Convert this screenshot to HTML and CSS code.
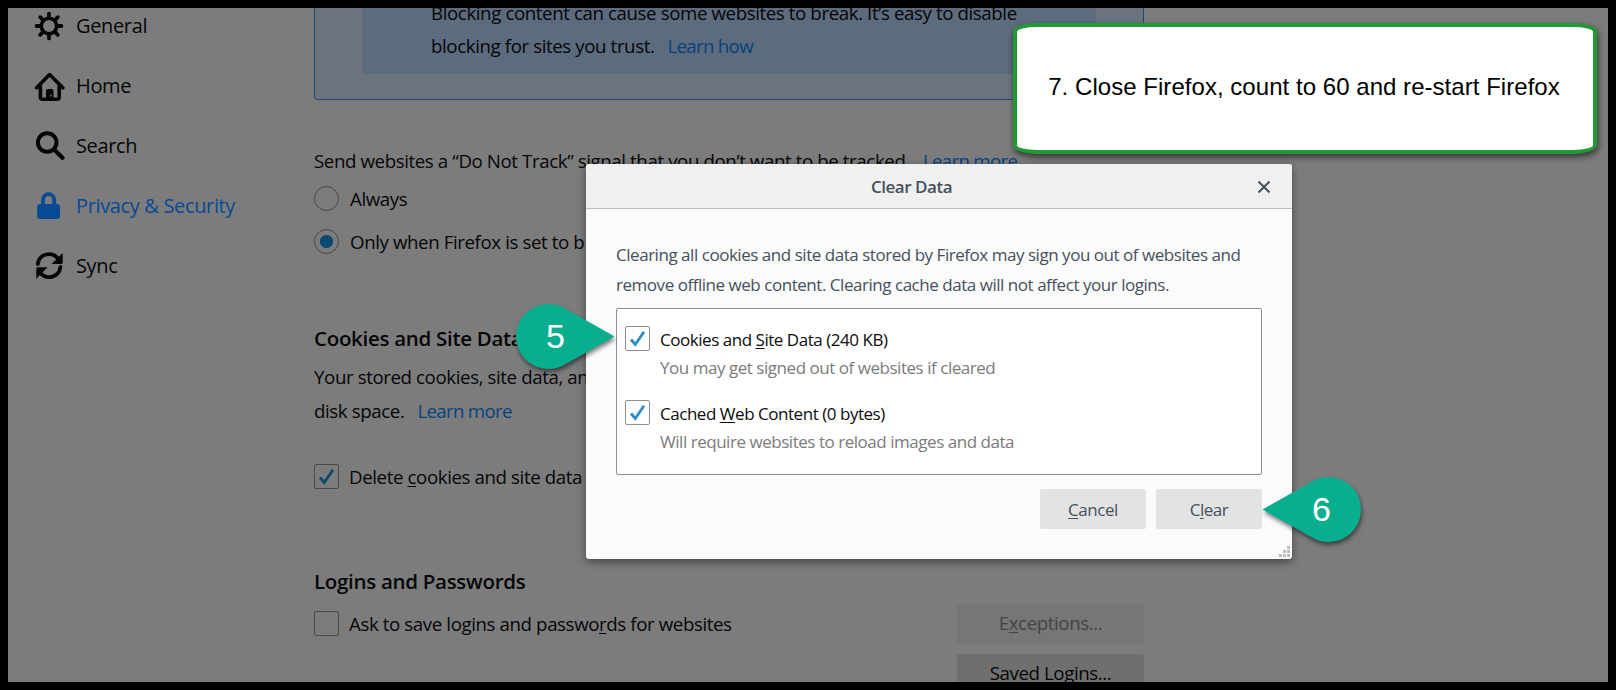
FILE: index.html
```html
<!DOCTYPE html>
<html lang="en">
<head>
<meta charset="utf-8">
<title>Clear Data</title>
<link rel="stylesheet" href="styles.css">
</head>
<body>
<div class="frame">
  <div class="page">
    <nav class="sidebar">
      <div class="nav-item">
        <svg class="icon" viewBox="0 0 32 32"><circle cx="16" cy="16" r="7.7" fill="none" stroke="currentColor" stroke-width="3.6"/><path d="M16 3.6V7M16 25v3.4M3.6 16H7M25 16h3.4M7.2 7.2l2.6 2.6M22.2 22.2l2.6 2.6M24.8 7.2l-2.6 2.6M9.8 22.2l-2.6 2.6" stroke="currentColor" stroke-width="3.8" stroke-linecap="round"/></svg>
        <span>General</span>
      </div>
      <div class="nav-item">
        <svg class="icon" viewBox="0 0 32 32"><path d="M3.6 17.8 16.6 4.6 29.8 17.8M7.4 16v11.3a2 2 0 0 0 2 2h14.8a2 2 0 0 0 2-2V16" fill="none" stroke="currentColor" stroke-width="3.6" stroke-linecap="round" stroke-linejoin="round"/><path d="M13 30V21a2 2 0 0 1 2-2h3.500a2 2 0 0 1 2 2v9zM17.300 24.600v2h1.200v-2z" fill="currentColor" fill-rule="evenodd"/></svg>
        <span>Home</span>
      </div>
      <div class="nav-item">
        <svg class="icon" viewBox="0 0 32 32"><circle cx="14.200" cy="12.500" r="9.300" fill="none" stroke="currentColor" stroke-width="4"/><path d="M21 19.500 29.500 27.800" stroke="currentColor" stroke-width="4.200" stroke-linecap="round"/></svg>
        <span>Search</span>
      </div>
      <div class="nav-item selected">
        <svg class="icon" viewBox="0 0 32 32"><path d="M10 15V9.800a5.600 5.600 0 0 1 11.200 0V15" fill="none" stroke="currentColor" stroke-width="3.800"/><rect x="4.200" y="14" width="22.800" height="15" rx="3" fill="currentColor"/></svg>
        <span>Privacy &amp; Security</span>
      </div>
      <div class="nav-item">
        <svg class="icon" viewBox="0 0 32 32"><path d="M4.800 14A11.300 11.300 0 0 1 25 8.600M27.400 17A11.300 11.300 0 0 1 7.500 23" fill="none" stroke="currentColor" stroke-width="3.800" stroke-linecap="round"/><path d="M29.700 3v9.500a1.500 1.500 0 0 1-1.500 1.500H18.500zM3.300 28.800v-10a1.500 1.500 0 0 1 1.500-1.500h9.700z" fill="currentColor"/></svg>
        <span>Sync</span>
      </div>
    </nav>
    <main class="content">
      <section class="tracking">
        <div class="warning">
          <div>Blocking content can cause some websites to break. It’s easy to disable</div>
          <div>blocking for sites you trust.<a class="link">Learn how</a></div>
        </div>
      </section>
      <p class="dnt">Send websites a “Do Not Track” signal that you don’t want to be tracked.<a class="link">Learn more</a></p>
      <div class="choice first"><span class="radio"></span><span>Always</span></div>
      <div class="choice second"><span class="radio on"></span><span>Only when Firefox is set to b</span></div>

      <h2 class="cookies-title">Cookies and Site Data</h2>
      <p class="stored">Your stored cookies, site data, an<br>disk space.<a class="link">Learn more</a></p>
      <div class="choice delete">
        <span class="check"><svg viewBox="0 0 25 25"><path d="M6 13.500 10.300 18.500 19 5.800"/></svg></span>
        <span>Delete <u>c</u>ookies and site data</span>
      </div>

      <h2 class="logins-title">Logins and Passwords</h2>
      <div class="logins">
        <div class="choice ask"><span class="check"></span><span>Ask to save logins and passwo<u>r</u>ds for websites</span></div>
        <div class="side-buttons">
          <div class="side-button disabled">E<u>x</u>ceptions...</div>
          <div class="side-button">Saved Logins...</div>
        </div>
      </div>
    </main>
  </div>

  <div class="dialog">
    <header class="dialog-head">
      <span class="dialog-title">Clear Data</span>
      <svg class="close" viewBox="0 0 14 14"><path d="M1.500 1.500 12.500 12.500M12.500 1.500 1.500 12.500"/></svg>
    </header>
    <div class="dialog-body">
      <p class="dialog-text">Clearing all cookies and site data stored by Firefox may sign you out of websites and<br>remove offline web content. Clearing cache data will not affect your logins.</p>
      <div class="options">
        <div class="option">
          <span class="check"><svg viewBox="0 0 25 25"><path d="M6 13.500 10.300 18.500 19 5.800"/></svg></span>
          <div><div class="option-name">Cookies and <u>S</u>ite Data (240 KB)</div><div class="option-note">You may get signed out of websites if cleared</div></div>
        </div>
        <div class="option">
          <span class="check"><svg viewBox="0 0 25 25"><path d="M6 13.500 10.300 18.500 19 5.800"/></svg></span>
          <div><div class="option-name">Cached <u>W</u>eb Content (0 bytes)</div><div class="option-note">Will require websites to reload images and data</div></div>
        </div>
      </div>
      <div class="actions">
        <div class="button"><u>C</u>ancel</div>
        <div class="button">C<u>l</u>ear</div>
      </div>
    </div>
    <svg class="grip" viewBox="0 0 11 11"><path d="M8 0h3v3H8zM4 4h3v3H4zM8 4h3v3H8zM0 8h3v3H0zM4 8h3v3H4zM8 8h3v3H8z"/></svg>
  </div>

  <div class="callout">7. Close Firefox, count to 60 and re-start Firefox</div>

  <div class="pin pin-five">
    <svg viewBox="0 0 99 65"><path d="M98.500 32.500 48.500 4.200A32.500 32.500 0 1 0 48.500 60.800Z"/></svg>
    <span>5</span>
  </div>
  <div class="pin pin-six">
    <svg viewBox="0 0 99 65"><path d="M.5 32.500 50.500 4.200A32.500 32.500 0 1 1 50.500 60.800Z"/></svg>
    <span>6</span>
  </div>
</div>
</body>
</html>
```
FILE: styles.css
```css
* { box-sizing: border-box; }
body, p, h2 { margin: 0; }
body {
  background: #000;
  font-family: "Open Sans", "Noto Sans", sans-serif;
  font-size: 18.700px;
  letter-spacing: -.4px;
  color: #060607;
  white-space: nowrap;
}
u { text-decoration-thickness: 1px; text-underline-offset: 2px; text-decoration-skip-ink: none; }
.frame {
  position: relative;
  width: 1616px;
  height: 690px;
  border: 8px solid #000;
  background: #7c7c7d;
  overflow: hidden;
}
.page { display: flex; height: 674px; overflow: hidden; }
.sidebar { width: 306px; flex: none; padding: 0 0 0 25px; margin-top: -12px; }
.nav-item { display: flex; align-items: center; gap: 11px; height: 60px; font-size: 20px; letter-spacing: -.35px; }
.nav-item span { padding-bottom: 2px; }
.nav-item.selected { color: #054a93; }
.icon { width: 32px; height: 32px; }
.link { color: #07437f; margin-left: 13px; letter-spacing: -.7px; }

.content { width: 830px; flex: none; }
.tracking {
  margin-top: -12px;
  padding: 0 47px 25px;
  border: 1px solid #1b4c80;
  border-top: 0;
  border-radius: 0 0 4px 4px;
  background: #6b747d;
}
.warning { padding: 0 70px 12px 69px; background: #5c6b7d; border-radius: 0 0 3px 3px; line-height: 33px; }
.dnt { margin-top: 44px; line-height: 33px; }
.choice { display: flex; gap: 11px; height: 25px; line-height: 25px; }
.choice.first { margin-top: 9px; }
.choice.second { margin-top: 18px; }
.radio { width: 25px; height: 25px; border: 1px solid #4a4a4b; border-radius: 50%; }
.radio.on { background: radial-gradient(circle, #0b4a73 6.200px, transparent 7px); }
.check { width: 25px; height: 25px; flex: none; border: 1px solid #4a4a4b; border-radius: 2px; }
.check svg { display: block; width: 25px; height: 25px; margin: -1px; fill: none; stroke: #0e4a70; stroke-width: 2.800; }
h2 { font-size: 20.500px; line-height: 27px; font-weight: 600; letter-spacing: -.3px; }
.cookies-title { margin-top: 71px; }
.stored { margin-top: 8px; line-height: 34px; }
.choice.delete { margin-top: 36px; gap: 10px; }
.logins-title { margin-top: 79px; }
.logins { display: flex; justify-content: space-between; align-items: flex-start; }
.choice.ask { margin-top: 16px; gap: 10px; }
.side-buttons { display: flex; flex-direction: column; gap: 10px; padding-top: 9px; }
.side-button { width: 187px; height: 40px; line-height: 38px; text-align: center; border-radius: 2px; background: #6f6f70; }
.side-button.disabled { background: #767677; color: #444445; }

.dialog {
  position: absolute;
  left: 578px;
  top: 156px;
  width: 706px;
  height: 395px;
  border-radius: 3px;
  background: #fbfbfb;
  box-shadow: 0 3px 8px rgba(0, 0, 0, .45);
  color: #45505c;
  font-size: 17px;
  letter-spacing: -.465px;
}
.dialog-head {
  display: flex;
  align-items: center;
  justify-content: center;
  position: relative;
  height: 45px;
  padding-right: 55px;
  border-bottom: 1px solid #bebebe;
  border-radius: 3px 3px 0 0;
  background: #f0f0f0;
  font-weight: 600;
}
.close { position: absolute; right: 21px; top: 16px; width: 14px; height: 14px; stroke: #45505c; stroke-width: 2; }
.dialog-body { padding: 31px 30px 0; }
.dialog-text { line-height: 30px; }
.options { height: 167px; margin-top: 8px; padding: 17px 8px; border: 1px solid #8e8e8e; border-radius: 2px; background: #fff; }
.option { display: flex; gap: 10px; height: 74px; }
.option .check { border-color: #8e8e93; }
.option .check svg { stroke: #2a8ccb; }
.option-name { line-height: 28px; color: #0c0c0d; }
.option-note { line-height: 28px; color: #7b7b7c; }
.actions { display: flex; justify-content: flex-end; gap: 10px; margin-top: 14px; }
.button { width: 106px; height: 40px; line-height: 41px; text-align: center; border-radius: 2px; background: #e3e3e3; }
.grip { position: absolute; right: 2px; bottom: 2px; width: 11px; height: 11px; fill: #bdbdbd; }

.callout {
  position: absolute;
  left: 1005px;
  top: 15px;
  width: 584px;
  height: 131px;
  padding-right: 2px;
  border: 4px solid #229a33;
  border-radius: 24px / 9px;
  background: #fff;
  box-shadow: 1px 3px 6px rgba(0, 0, 0, .6);
  color: #000;
  font: 24px/120px "Liberation Sans", Arial, sans-serif;
  letter-spacing: .04px;
  text-align: center;
}
.pin { position: absolute; width: 99px; height: 65px; color: #fff; font: 34px/65px "Liberation Sans", Arial, sans-serif; letter-spacing: 0; text-align: center; }
.pin svg { position: absolute; left: 0; top: 0; width: 99px; height: 65px; overflow: visible; fill: #09ae8f; filter: drop-shadow(1px 3px 2px rgba(0, 0, 0, .5)); }
.pin span { position: relative; }
.pin-five { left: 508px; top: 296px; padding-right: 20px; }
.pin-six { left: 1254px; top: 469px; padding-left: 20px; }
```
